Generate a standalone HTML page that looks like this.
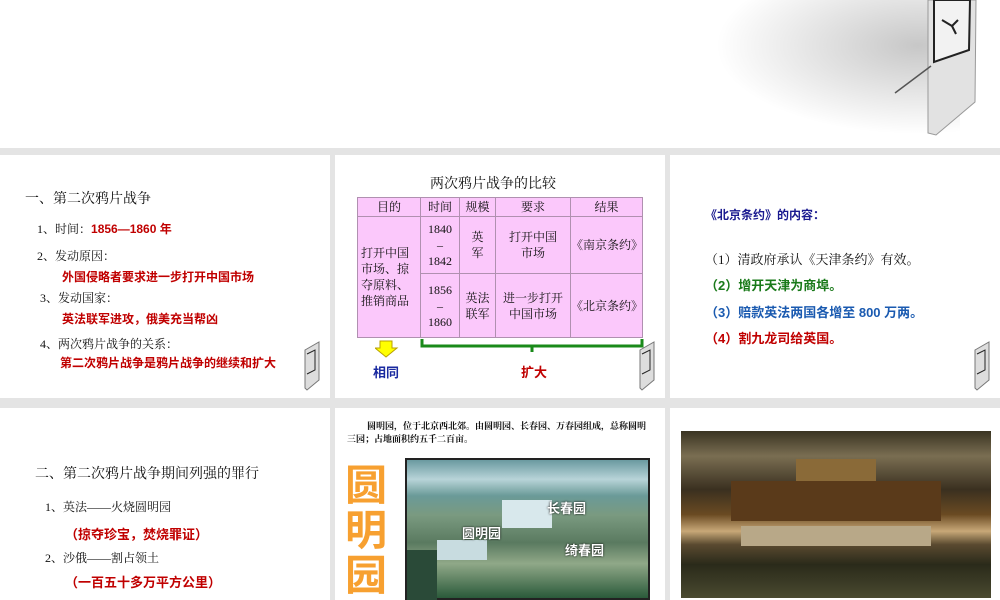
<!DOCTYPE html>
<html><head><meta charset="utf-8"><style>
*{margin:0;padding:0;box-sizing:border-box}
body{width:1000px;height:600px;background:#e4e4e4;position:relative;overflow:hidden;font-family:"Liberation Serif","Noto Serif CJK SC","Noto Sans CJK SC",serif;}
.s{position:absolute;background:#fff;overflow:hidden}
.t{position:absolute;white-space:nowrap;font-size:12px;color:#111}
.b{font-family:"Liberation Sans","Noto Sans CJK SC",sans-serif;font-weight:bold}
.r{color:#c00000}
table{border-collapse:collapse;position:absolute;background:#fbc8fb;font-size:12px;text-align:center;line-height:16px}
td{border:1px solid #b090b0;color:#111}
</style></head><body>
<div class="s" style="left:0;top:0;width:1000px;height:148px">
 <div style="position:absolute;left:680px;top:-40px;width:280px;height:190px;background:radial-gradient(ellipse at 85% 45%,rgba(0,0,0,0.22),rgba(0,0,0,0) 60%)"></div>
 <svg style="position:absolute;left:890px;top:0" width="110" height="148">
  <polygon points="38,0 86,0 85,102 46,135 38,133" fill="#e2e2e2" stroke="#999"/>
  <polygon points="44,0 80,0 79,50 44,62" fill="#f2f2f2" stroke="#222" stroke-width="2"/>
  <line x1="52" y1="20" x2="62" y2="26" stroke="#222" stroke-width="2"/><line x1="62" y1="26" x2="66" y2="34" stroke="#222" stroke-width="2"/><line x1="62" y1="26" x2="68" y2="20" stroke="#222" stroke-width="2"/>
  <line x1="41" y1="66" x2="5" y2="93" stroke="#555" stroke-width="1.5"/>
 </svg>
</div>
<div class="s" style="left:0;top:155px;width:330px;height:243px">
 <div class="t" style="left:25px;top:33px;font-size:14px">一、第二次鸦片战争</div>
 <div class="t" style="left:37px;top:65px">1、时间：<span class="b r">1856—1860 年</span></div>
 <div class="t" style="left:37px;top:92px">2、发动原因：</div>
 <div class="t b r" style="left:62px;top:113px">外国侵略者要求进一步打开中国市场</div>
 <div class="t" style="left:40px;top:134px">3、发动国家：</div>
 <div class="t b r" style="left:62px;top:155px">英法联军进攻，俄美充当帮凶</div>
 <div class="t" style="left:40px;top:180px">4、两次鸦片战争的关系：</div>
 <div class="t b r" style="left:60px;top:199px">第二次鸦片战争是鸦片战争的继续和扩大</div>
 <svg style="position:absolute;left:295px;top:185px" width="30" height="55"><polygon points="10,10 24,2 24,40 12,50 10,48" fill="#ddd" stroke="#777"/><polyline points="12,14 20,10 20,30 12,34" fill="none" stroke="#222"/></svg>
</div>
<div class="s" style="left:335px;top:155px;width:330px;height:243px">
 <div class="t" style="left:95px;top:18px;font-size:14px">两次鸦片战争的比较</div>
 <table style="left:22px;top:42px;width:286px;height:141px">
  <tr style="height:19px"><td style="width:63px">目的</td><td style="width:39px">时间</td><td style="width:36px">规模</td><td style="width:75px">要求</td><td>结果</td></tr>
  <tr style="height:57px"><td rowspan="2" style="text-align:left;padding-left:3px">打开中国<br>市场、掠<br>夺原料、<br>推销商品</td><td>1840<br>–<br>1842</td><td>英<br>军</td><td>打开中国<br>市场</td><td>《南京条约》</td></tr>
  <tr><td>1856<br>–<br>1860</td><td>英法<br>联军</td><td>进一步打开<br>中国市场</td><td>《北京条约》</td></tr>
 </table>
 <svg style="position:absolute;left:40px;top:184px" width="280" height="30"><polygon points="5,2 17,2 17,9 22,9 11,18 0,9 5,9" fill="#ffff00" stroke="#b8a000"/><polyline points="47,0 47,7 267,7 267,0" fill="none" stroke="#1a8a1a" stroke-width="3"/><line x1="157" y1="7" x2="157" y2="13" stroke="#1a8a1a" stroke-width="3"/></svg>
 <div class="t b" style="left:38px;top:207px;color:#1a2aa0;font-size:13px">相同</div>
 <div class="t b r" style="left:186px;top:207px;font-size:13px">扩大</div>
 <svg style="position:absolute;left:295px;top:185px" width="30" height="55"><polygon points="10,10 24,2 24,40 12,50 10,48" fill="#ddd" stroke="#777"/><polyline points="12,14 20,10 20,30 12,34" fill="none" stroke="#222"/></svg>
</div>
<div class="s" style="left:670px;top:155px;width:330px;height:243px">
 <div class="t b" style="left:35px;top:51px;color:#1a1a90">《北京条约》的内容：</div>
 <div class="t" style="left:35px;top:94px;font-size:13px">（1）清政府承认《天津条约》有效。</div>
 <div class="t b" style="left:35px;top:120px;color:#1a7a1a;font-size:13px">（2）增开天津为商埠。</div>
 <div class="t b" style="left:35px;top:147px;color:#1a5ab0;font-size:13px">（3）赔款英法两国各增至 800 万两。</div>
 <div class="t b r" style="left:35px;top:173px;font-size:13px">（4）割九龙司给英国。</div>
 <svg style="position:absolute;left:295px;top:185px" width="30" height="55"><polygon points="10,10 24,2 24,40 12,50 10,48" fill="#ddd" stroke="#777"/><polyline points="12,14 20,10 20,30 12,34" fill="none" stroke="#222"/></svg>
</div>
<div class="s" style="left:0;top:408px;width:330px;height:192px">
 <div class="t" style="left:35px;top:55px;font-size:14px">二、第二次鸦片战争期间列强的罪行</div>
 <div class="t" style="left:45px;top:90px">1、英法——火烧圆明园</div>
 <div class="t b r" style="left:65px;top:116px;font-size:13px">（掠夺珍宝，焚烧罪证）</div>
 <div class="t" style="left:45px;top:141px">2、沙俄——割占领土</div>
 <div class="t b r" style="left:65px;top:164px;font-size:13px">（一百五十多万平方公里）</div>
</div>
<div class="s" style="left:335px;top:408px;width:330px;height:192px">
 <div class="t b" style="left:12px;top:12px;font-size:9px;font-family:'Liberation Serif','Noto Serif CJK SC',serif;line-height:13px;white-space:normal;width:300px;text-indent:20px">圆明园，位于北京西北郊。由圆明园、长春园、万春园组成，总称圆明三园；占地面积约五千二百亩。</div>
 <div class="t b" style="left:10px;top:52px;font-size:42px;line-height:45px;color:#f7a030;font-family:'Noto Sans CJK SC',sans-serif;white-space:normal;width:50px">圆<br>明<br>园</div>
 <div style="position:absolute;left:70px;top:50px;width:245px;height:142px;border:2px solid #222;background:linear-gradient(180deg,#6a9aa0 0%,#b8d4d8 14%,#6a9a98 26%,#7a9a80 40%,#5a7a60 60%,#90a888 75%,#2a5a3a 100%)">
  <div style="position:absolute;left:95px;top:40px;width:50px;height:28px;background:#d8e8ec"></div>
  <div style="position:absolute;left:30px;top:80px;width:50px;height:20px;background:#c8dce0"></div>
  <div style="position:absolute;left:0;top:90px;width:30px;height:52px;background:#2a4a38"></div>
  <div class="t b" style="left:140px;top:38px;color:#fff;font-size:13px;text-shadow:0 0 2px #000">长春园</div>
  <div class="t b" style="left:55px;top:63px;color:#fff;font-size:13px;text-shadow:0 0 2px #000">圆明园</div>
  <div class="t b" style="left:158px;top:80px;color:#fff;font-size:13px;text-shadow:0 0 2px #000">绮春园</div>
 </div>
</div>
<div class="s" style="left:670px;top:408px;width:330px;height:192px">
 <div style="position:absolute;left:11px;top:23px;width:310px;height:167px;background:linear-gradient(180deg,#3a3422 0%,#7a6e52 15%,#3a3020 35%,#6a4a22 50%,#c8a878 60%,#5a4a30 68%,#2a2a1a 80%,#4a4a30 100%)">
  <div style="position:absolute;left:115px;top:28px;width:80px;height:30px;background:#8a6a38"></div>
  <div style="position:absolute;left:50px;top:50px;width:210px;height:40px;background:#5a3a1a"></div>
  <div style="position:absolute;left:60px;top:95px;width:190px;height:20px;background:#b8a888"></div>
 </div>
</div>
</body></html>
